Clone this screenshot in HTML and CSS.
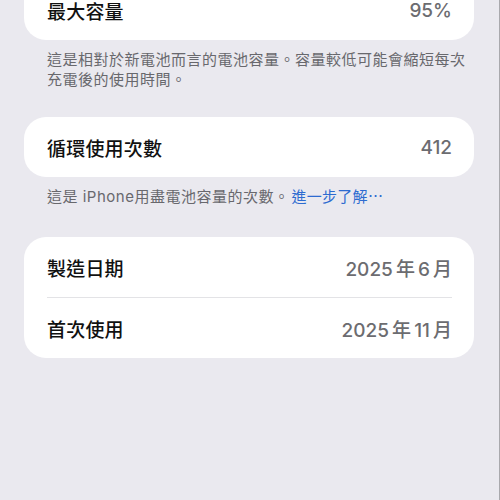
FILE: index.html
```html
<!DOCTYPE html>
<html lang="zh-Hant">
<head>
<meta charset="utf-8">
<link rel="stylesheet" href="styles.css">
</head>
<body>
<div class="page">
  <section class="group">
    <div class="card">
      <div class="row"><span class="label">最大容量</span><span class="value">95%</span></div>
    </div>
    <p class="note">這是相對於新電池而言的電池容量。容量較低可能會縮短每次充電後的使用時間。</p>
  </section>
  <section class="group">
    <div class="card">
      <div class="row"><span class="label">循環使用次數</span><span class="value">412</span></div>
    </div>
    <p class="note">這是 iPhone用盡電池容量的次數。<a class="link">進一步了解⋯</a></p>
  </section>
  <section class="group group-last">
    <div class="card">
      <div class="row"><span class="label">製造日期</span><span class="value">2025 年 6 月</span></div>
      <div class="divider"></div>
      <div class="row"><span class="label">首次使用</span><span class="value">2025 年 11 月</span></div>
    </div>
  </section>
</div>
</body>
</html>
```
FILE: styles.css
```css
html, body {
  margin: 0;
  padding: 0;
  background: #eae9ef;
  height: 100%;
  overflow: hidden;
}
body {
  font-family: Inter, "Noto Sans CJK TC", sans-serif;
  border-right: 1px solid #a9a9ad;
  box-sizing: border-box;
}
.page {
  margin-top: -20px;
  padding: 0 25px 0 24px;
  display: flex;
  flex-direction: column;
  gap: 27px;
}
.group {
  display: flex;
  flex-direction: column;
}
.group-last {
  margin-top: 3px;
}
.card {
  background: #ffffff;
  border-radius: 22px;
  padding: 0 22px 0 23px;
}
.row {
  height: 60px;
  display: flex;
  align-items: center;
  justify-content: space-between;
}
.label {
  font-size: 19px;
  font-weight: 500;
  color: #111111;
  letter-spacing: 0.2px;
}
.value {
  font-size: 19px;
  font-weight: 500;
  color: #6c6c70;
  word-spacing: -2px;
}
.divider {
  height: 1px;
  background: #e3e3e6;
}
.note {
  margin: 10px 0 0;
  padding: 0 0 0 23px;
  font-size: 15px;
  line-height: 20px;
  color: #68686d;
  letter-spacing: 0.5px;
}
.link {
  color: #2d6bd0;
  margin-left: 2px;
  letter-spacing: 0.3px;
}
```
